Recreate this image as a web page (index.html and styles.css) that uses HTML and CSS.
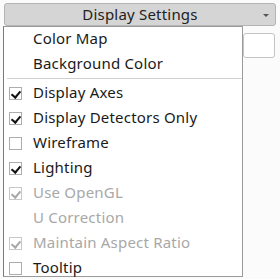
FILE: index.html
```html
<!DOCTYPE html>
<html lang="en">
<head>
  <meta charset="UTF-8" />
  <meta name="viewport" content="width=device-width, initial-scale=1.0"/>
  <title>Display Settings</title>
  <link rel="stylesheet" href="styles.css">
</head>
<body>
  <div class="panel">
    <button class="combo">
      <span>Display Settings</span>
      <span class="arrow"></span>
    </button>
    <div class="behind"></div>

    <div class="menu">
      <div class="item"><span class="box none"></span>Color Map</div>
      <div class="item"><span class="box none"></span>Background Color</div>
      <div class="sep"></div>
      <div class="item"><span class="box checked"></span>Display Axes</div>
      <div class="item"><span class="box checked"></span>Display Detectors Only</div>
      <div class="item"><span class="box"></span>Wireframe</div>
      <div class="item"><span class="box checked"></span>Lighting</div>
      <div class="item disabled"><span class="box checked"></span>Use OpenGL</div>
      <div class="item disabled"><span class="box none"></span>U Correction</div>
      <div class="item disabled"><span class="box checked"></span>Maintain Aspect Ratio</div>
      <div class="item"><span class="box"></span>Tooltip</div>
    </div>
  </div>
</body>
</html>
```

FILE: styles.css
```css
body {
  margin: 0;
  background: #fbfbfb;
  font-family: "Noto Sans", "DejaVu Sans", sans-serif;
  font-size: 15px;
  letter-spacing: 0.2px;
  color: #1a1a1a;
}

.panel {
  position: relative;
  width: 280px;
  height: 279px;
  padding-top: 3px;
  box-sizing: border-box;
}

.combo {
  display: flex;
  align-items: center;
  justify-content: center;
  position: relative;
  width: 272px;
  height: 23px;
  margin-left: 4px;
  padding: 0 0 1px;
  border: 1px solid #b4b4b4;
  border-radius: 3px;
  background: #d5d5d5;
  font: inherit;
  letter-spacing: inherit;
  color: #222;
}

.arrow {
  position: absolute;
  right: 6px;
  top: 10px;
  border-left: 3px solid transparent;
  border-right: 3px solid transparent;
  border-top: 3px solid #555;
}

.behind {
  position: absolute;
  left: 243px;
  top: 33px;
  width: 30px;
  height: 23px;
  border: 1px solid #c4c4c4;
  border-radius: 3px;
  background: #fff;
}

.menu {
  position: absolute;
  left: 3px;
  top: 26px;
  width: 238px;
  height: 249px;
  background: #fff;
  border: 1px solid #9a9a9a;
  border-left-color: #7a7a7a;
}

.item {
  display: flex;
  align-items: center;
  height: 25px;
  padding-left: 5px;
  padding-bottom: 3px;
  box-sizing: border-box;
}

.box {
  width: 13px;
  height: 13px;
  margin-top: 2px;
  margin-right: 11px;
  border: 1px solid #adadad;
  box-sizing: border-box;
  position: relative;
}

.box.none {
  border-color: transparent;
}

.box.checked::after {
  content: "";
  position: absolute;
  left: 3px;
  top: 1px;
  width: 4px;
  height: 7px;
  border-right: 2px solid #111;
  border-bottom: 2px solid #111;
  transform: rotate(40deg);
}

.disabled {
  color: #a8a8a8;
}

.disabled .box.checked {
  border-color: #c8c8c8;
}

.disabled .box.checked::after {
  border-color: #a8a8a8;
}

.sep {
  height: 1px;
  margin: 1px 0 2px 3px;
  background: #d0d0d0;
}
```
